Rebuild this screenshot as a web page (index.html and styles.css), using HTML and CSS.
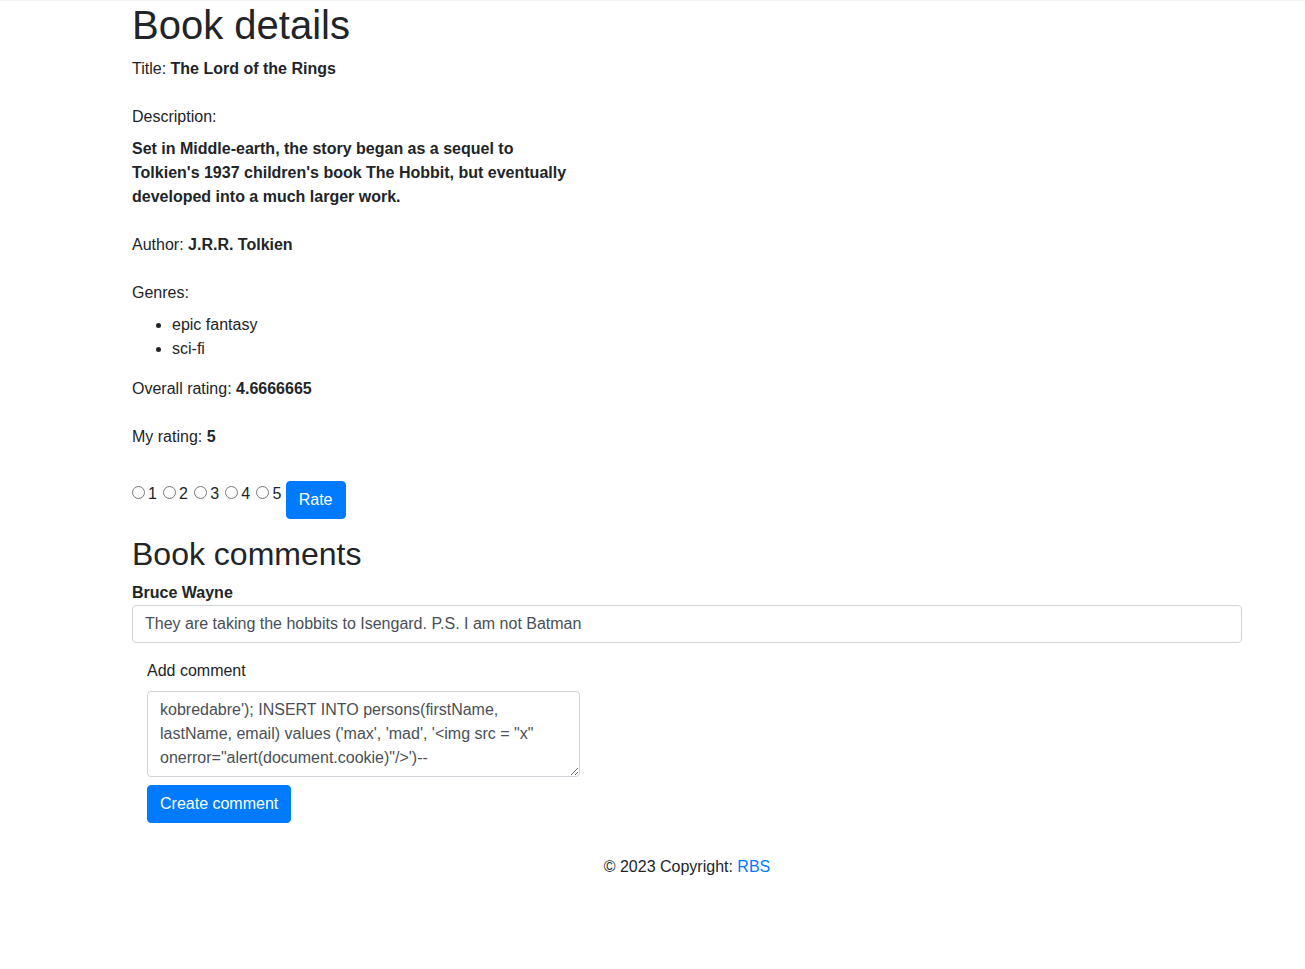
FILE: index.html
```html
<!DOCTYPE html>
<html lang="en">
<head>
<meta charset="utf-8">
<title>Book details</title>
<link rel="stylesheet" href="styles.css">
</head>
<body>
<div class="topbar"></div>
<main class="container">
  <h1 class="page-title">Book details</h1>
  <div class="field field-gap">Title: <b>The Lord of the Rings</b></div>
  <div class="field field-tight">Description:</div>
  <div class="description field-gap">Set in Middle-earth, the story began as a sequel to Tolkien's 1937 children's book The Hobbit, but eventually developed into a much larger work.</div>
  <div class="field field-gap">Author: <b>J.R.R. Tolkien</b></div>
  <div class="field field-tight">Genres:</div>
  <ul class="genres">
    <li>epic fantasy</li>
    <li>sci-fi</li>
  </ul>
  <div class="field field-gap">Overall rating: <b>4.6666665</b></div>
  <div class="field rating-gap">My rating: <b>5</b></div>
  <form class="rate-form">
    <input type="radio" name="rating" value="1" class="radio">1
    <input type="radio" name="rating" value="2" class="radio">2
    <input type="radio" name="rating" value="3" class="radio">3
    <input type="radio" name="rating" value="4" class="radio">4
    <input type="radio" name="rating" value="5" class="radio">5
    <button type="button" class="btn btn-top">Rate</button>
  </form>

  <h2 class="section-title">Book comments</h2>
  <div class="comment">
    <div class="comment-author">Bruce Wayne</div>
    <div class="comment-box">They are taking the hobbits to Isengard. P.S. I am not Batman</div>
  </div>

  <form class="add-comment">
    <label class="add-label" for="comment">Add comment</label>
    <textarea id="comment" class="comment-input" rows="3">kobredabre'); INSERT INTO persons(firstName, lastName, email) values ('max', 'mad', '&lt;img src = "x" onerror="alert(document.cookie)"/&gt;')--</textarea>
    <button type="button" class="btn">Create comment</button>
  </form>

  <footer class="footer">© 2023 Copyright: <a href="#" class="footer-link">RBS</a></footer>
</main>
</body>
</html>
```
FILE: styles.css
```css
html, body {
  margin: 0;
  padding: 0;
  background: #fff;
}
body {
  font-family: "Liberation Sans", Arial, sans-serif;
  font-size: 16px;
  line-height: 1.5;
  color: #212529;
}
.topbar {
  height: 1px;
  background: #f3f4f5;
}
.container {
  width: 1110px;
  margin-left: 132px;
}
.page-title {
  font-size: 40px;
  font-weight: 500;
  line-height: 1.2;
  margin: 0 0 8px;
}
.field {
  margin: 0;
}
.field b, .description {
  font-weight: 700;
}
.field-gap {
  margin-bottom: 24px;
}
.field-tight {
  margin-bottom: 8px;
}
.rating-gap {
  margin-bottom: 32px;
}
.description {
  width: 445px;
}
.genres {
  margin: 0 0 16px;
  padding-left: 40px;
}
.rate-form {
  margin: 0 0 16px;
  line-height: 26px;
}
.radio {
  margin: 0 3px 0 1.75px;
  width: 13px;
  height: 13px;
  vertical-align: baseline;
}
.radio:first-child {
  margin-left: 0;
}
.btn {
  display: inline-block;
  font-family: inherit;
  font-size: 16px;
  line-height: 24px;
  padding: 6px 12px;
  color: #fff;
  background: #007bff;
  border: 1px solid #007bff;
  border-radius: 4px;
  cursor: pointer;
  vertical-align: middle;
}
.btn-top {
  vertical-align: top;
}
.section-title {
  font-size: 32px;
  font-weight: 500;
  line-height: 1.2;
  margin: 0 0 8px;
}
.comment-author {
  font-weight: 700;
}
.comment-box {
  border: 1px solid #ced4da;
  border-radius: 4px;
  padding: 6px 12px;
  color: #495057;
  background: #fff;
}
.add-comment {
  padding: 16px 15px 0;
}
.add-label {
  display: block;
  margin-bottom: 8px;
}
.comment-input {
  display: block;
  box-sizing: border-box;
  width: 433px;
  height: 86px;
  margin: 0 0 8px;
  padding: 6px 12px;
  font-family: inherit;
  font-size: 16px;
  line-height: 24px;
  color: #495057;
  border: 1px solid #ced4da;
  border-radius: 4px;
  resize: vertical;
  overflow: hidden;
}
.footer {
  margin-top: 32px;
  text-align: center;
}
.footer-link {
  color: #007bff;
  text-decoration: none;
}
```
